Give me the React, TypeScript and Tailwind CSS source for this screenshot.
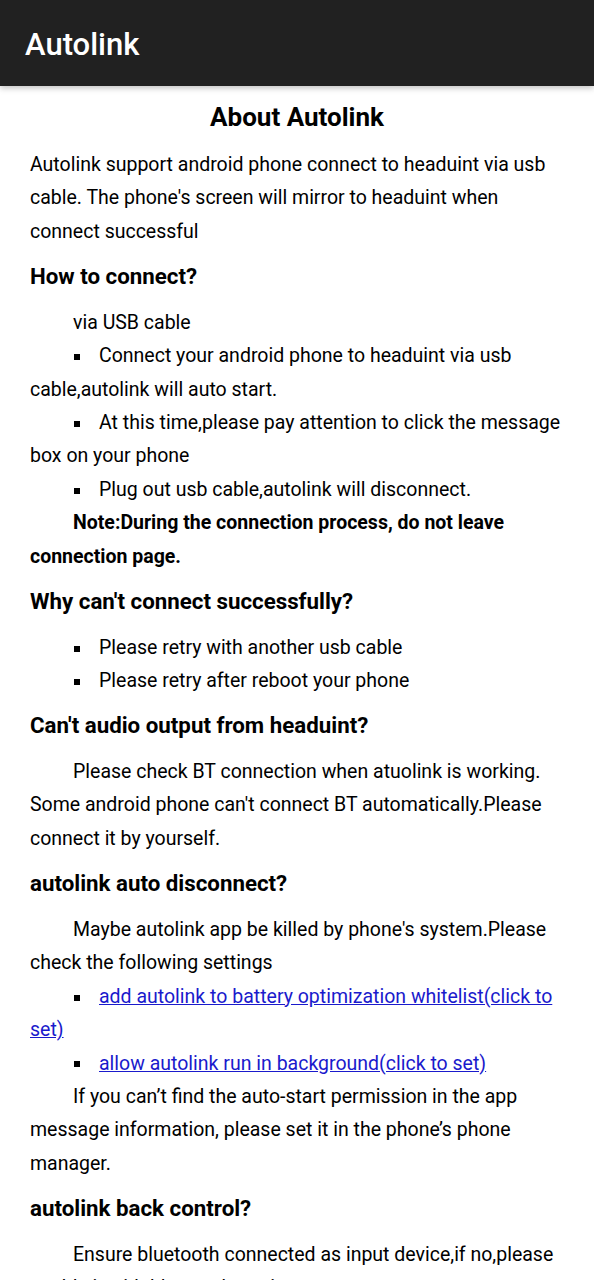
const FONT = { fontFamily: 'Roboto, "Noto Sans", sans-serif' };

function Heading({ children }: { children: React.ReactNode }) {
  return <h2 className="py-[15px] text-[22.3px] font-bold leading-[27.6px]">{children}</h2>;
}

function Para({ children, bold }: { children: React.ReactNode; bold?: boolean }) {
  return <p className={`indent-[43px] ${bold ? 'font-bold' : ''}`}>{children}</p>;
}

function Bullet({ children }: { children: React.ReactNode }) {
  return (
    <p className="indent-[44px]">
      <span className="mr-[19px] inline-block h-[6px] w-[6px] bg-black align-middle" />
      {children}
    </p>
  );
}

function Link({ children }: { children: React.ReactNode }) {
  return <a className="text-[#1a1acc] underline">{children}</a>;
}

export default function App() {
  return (
    <div className="min-h-screen bg-white text-black" style={FONT}>
      {/* Toolbar */}
      <header className="relative z-10 flex h-[86px] items-center bg-[#212121] px-[25px] pt-[4px] shadow-[0_2px_6px_rgba(0,0,0,0.25)]">
        <span className="text-[31px] font-medium text-white">Autolink</span>
      </header>

      <main className="px-[30px] text-[19.5px] leading-[33.4px]">
        <h1 className="text-center text-[26px] font-bold leading-[62px]">About Autolink</h1>
        <p>
          Autolink support android phone connect to headuint via usb cable. The phone's screen will mirror to
          headuint when connect successful
        </p>

        <Heading>How to connect?</Heading>
        <Para>via USB cable</Para>
        <Bullet>Connect your android phone to headuint via usb cable,autolink will auto start.</Bullet>
        <Bullet>At this time,please pay attention to click the message box on your phone</Bullet>
        <Bullet>Plug out usb cable,autolink will disconnect.</Bullet>
        <Para bold>Note:During the connection process, do not leave connection page.</Para>

        <Heading>Why can't connect successfully?</Heading>
        <Bullet>Please retry with another usb cable</Bullet>
        <Bullet>Please retry after reboot your phone</Bullet>

        <Heading>Can't audio output from headuint?</Heading>
        <Para>
          Please check BT connection when atuolink is working. Some android phone can't connect BT
          automatically.Please connect it by yourself.
        </Para>

        <Heading>autolink auto disconnect?</Heading>
        <Para>Maybe autolink app be killed by phone's system.Please check the following settings</Para>
        <Bullet>
          <Link>add autolink to battery optimization whitelist(click to set)</Link>
        </Bullet>
        <Bullet>
          <Link>allow autolink run in background(click to set)</Link>
        </Bullet>
        <Para>
          If you can’t find the auto-start permission in the app message information, please set it in the
          phone’s phone manager.
        </Para>

        <Heading>autolink back control?</Heading>
        <Para>
          Ensure bluetooth connected as input device,if no,please enable it with bluetooth settings.
        </Para>
      </main>
    </div>
  );
}
